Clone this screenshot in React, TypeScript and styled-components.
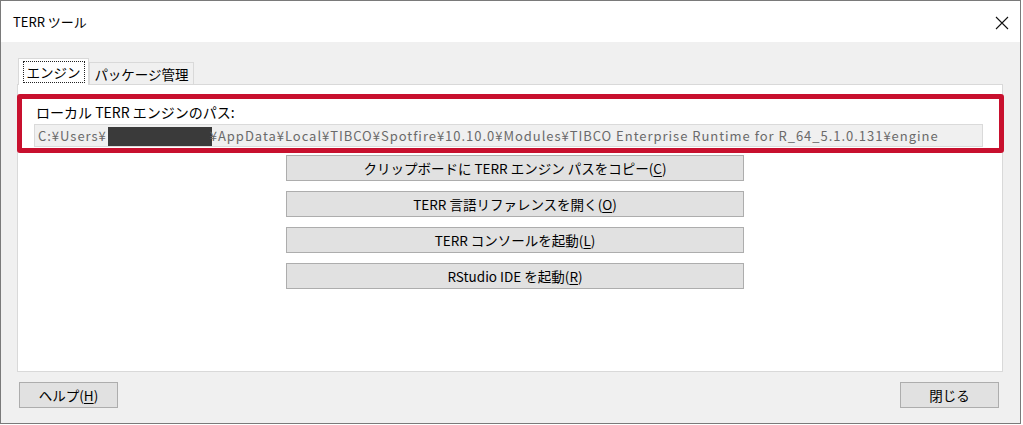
import styled, { createGlobalStyle } from 'styled-components';

const GlobalStyle = createGlobalStyle`
  html, body {
    margin: 0;
    padding: 0;
    background: #fff;
  }
  body {
    font-family: "Noto Sans CJK JP", "Liberation Sans", sans-serif;
    color: #000;
  }
  * {
    box-sizing: border-box;
  }
`;

const Window = styled.div`
  width: 1021px;
  height: 424px;
  border: 1px solid #7a7a7a;
  background: #f0f0f0;

  display: flex;
  flex-direction: column;
`;

const TitleBar = styled.div`
  height: 41px;
  padding: 0 11px 0 12px;
  background: #fff;

  display: flex;
  align-items: center;
  justify-content: space-between;
`;

const Title = styled.div`
  font-size: 13px;
  line-height: 18px;
`;

const CloseIcon = styled.svg`
  width: 14px;
  height: 14px;
  margin-top: 2px;
`;

const Body = styled.div`
  flex: 1;
  padding: 16px 0 0 16px;

  display: flex;
  flex-direction: column;
`;

const TabRow = styled.div`
  padding-left: 1px;

  display: flex;
  align-items: flex-end;
`;

const Tab = styled.div<{ $active?: boolean }>`
  position: relative;
  z-index: 1;
  height: ${p => (p.$active ? '27px' : '22px')};
  width: ${p => (p.$active ? '71px' : '105px')};
  margin-bottom: ${p => (p.$active ? '-1px' : '0')};
  border: 1px solid #d9d9d9;
  border-bottom: none;
  background: ${p => (p.$active ? '#fff' : '#f0f0f0')};
  font-size: 13.5px;
  line-height: 18px;

  display: flex;
  align-items: center;
  justify-content: center;
`;

const FocusRect = styled.span`
  padding: 1px 3px;
  outline: 1px dotted #222;
`;

const Panel = styled.div`
  width: 986px;
  height: 288px;
  border: 1px solid #d9d9d9;
  background: #fff;

  display: flex;
  flex-direction: column;
`;

const Highlight = styled.div`
  margin: 9px -2px 0 -1px;
  height: 59px;
  border: 5px solid #c8102e;
  border-radius: 3px;

  display: flex;
  flex-direction: column;
`;

const FieldLabel = styled.div`
  padding: 4px 0 0 14px;
  font-size: 14px;
  line-height: 18px;
`;

const PathField = styled.div`
  height: 23px;
  margin: 3px 16px 0 12px;
  padding-left: 3px;
  border: 1px solid #dadada;
  background: #f0f0f0;
  color: #6a6a6a;
  font-size: 13px;
  letter-spacing: 0.97px;
  line-height: 21px;
  white-space: nowrap;
  overflow: hidden;
`;

const Redacted = styled.span`
  display: inline-block;
  width: 104px;
  height: 19px;
  margin: 0 -2px 0 1px;
  vertical-align: -5px;
  background: #3a3a3a;
`;

const ActionList = styled.div`
  margin: 2px 0 0 268px;

  display: flex;
  flex-direction: column;
  row-gap: 10px;
`;

const Button = styled.div<{ $width?: number }>`
  width: ${p => p.$width ?? 458}px;
  height: 26px;
  border: 1px solid #adadad;
  background: #e1e1e1;
  font-size: 13.5px;
  line-height: 18px;

  display: flex;
  align-items: center;
  justify-content: center;
`;

const Key = styled.span`
  text-decoration: underline;
  text-underline-offset: 2px;
`;

const Footer = styled.div`
  margin-top: 10px;
  padding: 0 21px 0 2px;

  display: flex;
  justify-content: space-between;
`;

const ACTIONS = [
  { label: 'クリップボードに TERR エンジン パスをコピー', key: 'C' },
  { label: 'TERR 言語リファレンスを開く', key: 'O' },
  { label: 'TERR コンソールを起動', key: 'L' },
  { label: 'RStudio IDE を起動', key: 'R' },
];

const App = () => {
  return (
    <>
      <GlobalStyle />
      <Window>
        <TitleBar>
          <Title>TERR ツール</Title>
          <CloseIcon viewBox="0 0 14 14">
            <path d="M1 1 L13 13 M13 1 L1 13" stroke="#111" strokeWidth="1.1" fill="none" />
          </CloseIcon>
        </TitleBar>
        <Body>
          <TabRow>
            <Tab $active>
              <FocusRect>エンジン</FocusRect>
            </Tab>
            <Tab>パッケージ管理</Tab>
          </TabRow>
          <Panel>
            <Highlight>
              <FieldLabel>ローカル TERR エンジンのパス:</FieldLabel>
              <PathField>
                C:¥Users¥<Redacted />¥AppData¥Local¥TIBCO¥Spotfire¥10.10.0¥Modules¥TIBCO Enterprise Runtime for R_64_5.1.0.131¥engine
              </PathField>
            </Highlight>
            <ActionList>
              {
                ACTIONS.map(action => {
                  return (
                    <Button key={action.key}>
                      {action.label}(<Key>{action.key}</Key>)
                    </Button>
                  )
                })
              }
            </ActionList>
          </Panel>
          <Footer>
            <Button $width={99}>
              ヘルプ(<Key>H</Key>)
            </Button>
            <Button $width={99}>閉じる</Button>
          </Footer>
        </Body>
      </Window>
    </>
  );
};

export default App;
